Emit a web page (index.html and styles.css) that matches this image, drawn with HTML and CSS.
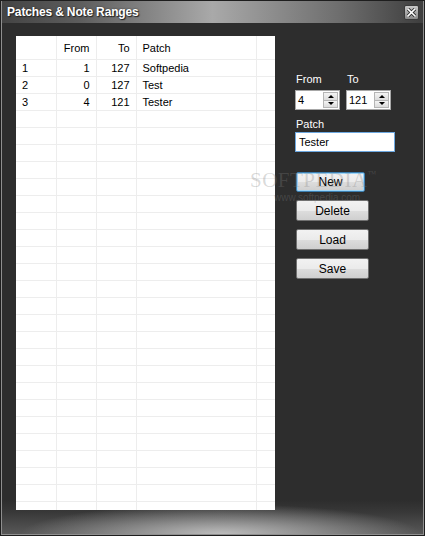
FILE: index.html
```html
<!DOCTYPE html>
<html lang="en">
<head>
<meta charset="utf-8"/>
<title>Patches &amp; Note Ranges</title>
<link rel="stylesheet" href="styles.css">
</head>
<body>
<div class="window">
    <div class="titlebar">
        <span class="title">Patches &amp; Note Ranges</span>
        <span class="close">
            <svg width="9" height="9" viewBox="0 0 9 9">
                <path d="M1 1 L8 8 M8 1 L1 8" stroke="#333" stroke-width="3.4" stroke-linecap="square"/>
                <path d="M1 1 L8 8 M8 1 L1 8" stroke="#fff" stroke-width="1.6" stroke-linecap="square"/>
            </svg>
        </span>
    </div>
    <div class="client">
        <div class="grid">
            <table>
                <colgroup>
                    <col class="c-num"><col class="c-from"><col class="c-to"><col class="c-patch"><col>
                </colgroup>
                <thead>
                    <tr><th></th><th class="num">From</th><th class="num">To</th><th>Patch</th><th></th></tr>
                </thead>
                <tbody id="rows">
                    <tr><td>1</td><td class="num">1</td><td class="num">127</td><td>Softpedia</td><td></td></tr>
                    <tr><td>2</td><td class="num">0</td><td class="num">127</td><td>Test</td><td></td></tr>
                    <tr><td>3</td><td class="num">4</td><td class="num">121</td><td>Tester</td><td></td></tr>
                    <tr><td></td><td></td><td></td><td></td><td></td></tr>
                    <tr><td></td><td></td><td></td><td></td><td></td></tr>
                    <tr><td></td><td></td><td></td><td></td><td></td></tr>
                    <tr><td></td><td></td><td></td><td></td><td></td></tr>
                    <tr><td></td><td></td><td></td><td></td><td></td></tr>
                    <tr><td></td><td></td><td></td><td></td><td></td></tr>
                    <tr><td></td><td></td><td></td><td></td><td></td></tr>
                    <tr><td></td><td></td><td></td><td></td><td></td></tr>
                    <tr><td></td><td></td><td></td><td></td><td></td></tr>
                    <tr><td></td><td></td><td></td><td></td><td></td></tr>
                    <tr><td></td><td></td><td></td><td></td><td></td></tr>
                    <tr><td></td><td></td><td></td><td></td><td></td></tr>
                    <tr><td></td><td></td><td></td><td></td><td></td></tr>
                    <tr><td></td><td></td><td></td><td></td><td></td></tr>
                    <tr><td></td><td></td><td></td><td></td><td></td></tr>
                    <tr><td></td><td></td><td></td><td></td><td></td></tr>
                    <tr><td></td><td></td><td></td><td></td><td></td></tr>
                    <tr><td></td><td></td><td></td><td></td><td></td></tr>
                    <tr><td></td><td></td><td></td><td></td><td></td></tr>
                    <tr><td></td><td></td><td></td><td></td><td></td></tr>
                    <tr><td></td><td></td><td></td><td></td><td></td></tr>
                    <tr><td></td><td></td><td></td><td></td><td></td></tr>
                    <tr><td></td><td></td><td></td><td></td><td></td></tr>
                    <tr><td></td><td></td><td></td><td></td><td></td></tr>
                </tbody>
            </table>
        </div>
        <div class="panel">
            <div class="ranges">
                <div class="field">
                    <div class="label">From</div>
                    <div class="spin"><span class="val">4</span><span class="arrows"><i class="up"></i><i class="down"></i></span></div>
                </div>
                <div class="field">
                    <div class="label">To</div>
                    <div class="spin"><span class="val">121</span><span class="arrows"><i class="up"></i><i class="down"></i></span></div>
                </div>
            </div>
            <div class="label patch-label">Patch</div>
            <div class="textbox">Tester</div>
            <div class="buttons">
                <button class="btn focused">New</button>
                <button class="btn">Delete</button>
                <button class="btn">Load</button>
                <button class="btn">Save</button>
            </div>
        </div>
        <div class="watermark">SOFTPEDIA<span class="tm">™</span><div class="url">www.softpedia.com</div></div>
    </div>
</div>
</body>
</html>
```

FILE: styles.css
```css
html, body {
    margin:0;
    padding:0;
}
body {
    background:#2d2d2d;
    font-family: "Liberation Sans", Arial, sans-serif;
    font-size:11px;
    color:#000;
}
.window {
    box-sizing:border-box;
    width:425px;
    height:536px;
    border:1px solid #1e1e1e;
    box-shadow: inset 0 0 0 1px #8f8f8f;
    display:flex;
    flex-direction:column;
    background:#2d2d2d;
    overflow:hidden;
}
.titlebar {
    display:flex;
    align-items:center;
    justify-content:space-between;
    height:22px;
    flex:none;
    padding:0 4px 0 5px;
    margin:0 1px;
    background: linear-gradient(90deg, #444 0%, #5c5c5c 18%, #a9a9a9 50%, #6e6e6e 80%, #3e3e3e 100%);
}
.title {
    color:#fff;
    font-weight:bold;
    font-size:12px;
    letter-spacing:-0.15px;
    text-shadow: 1px 1px 1px #222, 0 0 2px #333;
}
.close {
    display:flex;
    align-items:center;
    justify-content:center;
    width:13px;
    height:13px;
    border:1px solid #3a3a3a;
    border-radius:2px;
    background: linear-gradient(#c8c8c8, #8a8a8a);
    margin-top:1px;
}
.client {
    position:relative;
    flex:1;
    display:flex;
    align-items:flex-start;
    padding:13px 0 0 14px;
    margin:0 1px 1px;
    background:
        radial-gradient(ellipse 200px 30px at 52% 100%, rgba(200,200,200,0.9), rgba(200,200,200,0) 100%),
        linear-gradient(#2d2d2d calc(100% - 34px), #383838 calc(100% - 22px), #585858 100%);
}
.grid {
    width:259px;
    height:474px;
    background:#fff;
    overflow:hidden;
    flex:none;
}
.grid table {
    width:259px;
    border-collapse:collapse;
    table-layout:fixed;
}
.c-num, .c-from, .c-to { width:40px; }
.c-patch { width:120px; }
.grid th, .grid td {
    box-sizing:border-box;
    border-right:1px solid #ededed;
    border-bottom:1px solid #ededed;
    padding:0 6px;
    font-weight:normal;
    text-align:left;
    white-space:nowrap;
    overflow:hidden;
}
.grid th:last-child, .grid td:last-child {
    border-right:none;
}
.grid th {
    height:23px;
    padding-top:1px;
}
.grid td {
    height:17px;
    padding-top:1px;
}
.grid .num {
    text-align:right;
    padding-right:6px;
}
.panel {
    margin-left:20px;
    padding-top:36px;
    color:#fff;
    width:100px;
}
.ranges {
    display:flex;
    gap:6px;
}
.label {
    line-height:14px;
    height:14px;
    padding-left:1px;
}
.field .label {
    margin-bottom:4px;
}
.spin {
    box-sizing:border-box;
    width:45px;
    height:20px;
    display:flex;
    justify-content:space-between;
    background:#fff;
    color:#000;
    border:1px solid #a7a7a7;
    padding:1px;
}
.spin .val {
    line-height:16px;
    padding-left:1px;
}
.arrows {
    display:flex;
    flex-direction:column;
    width:15px;
    height:16px;
}
.arrows i {
    box-sizing:border-box;
    flex:1;
    display:flex;
    align-items:center;
    justify-content:center;
    background: linear-gradient(#f4f4f4, #dcdcdc);
    border:1px solid #b5b5b5;
}
.arrows i + i {
    border-top:none;
}
.arrows i::after {
    content:"";
    border-left:3px solid transparent;
    border-right:3px solid transparent;
}
.arrows .up::after {
    border-bottom:3px solid #000;
}
.arrows .down::after {
    border-top:3px solid #000;
}
.patch-label {
    margin-top:7px;
    margin-bottom:1px;
}
.textbox {
    box-sizing:border-box;
    width:100px;
    height:20px;
    background:#fff;
    color:#000;
    border:1px solid #6da8e0;
    line-height:18px;
    padding-left:3px;
}
.buttons {
    display:flex;
    flex-direction:column;
    align-items:flex-start;
    gap:8px;
    margin-top:20px;
    padding-left:1px;
}
.btn {
    box-sizing:border-box;
    width:73px;
    height:21px;
    padding:0;
    font-family:inherit;
    font-size:12px;
    color:#000;
    border:1px solid #707070;
    border-radius:2px;
    background: linear-gradient(#f2f2f2 0%, #ebebeb 50%, #dddddd 51%, #cfcfcf 100%);
}
.btn.focused {
    width:69px;
    height:20px;
    border:1px solid #3c7fb1;
    box-shadow: inset 0 0 0 1px #9dd5f8;
}
.watermark {
    position:absolute;
    left:248px;
    top:145px;
    font-family:"Liberation Serif", "Times New Roman", serif;
    font-size:21px;
    letter-spacing:0.5px;
    color:rgba(130,130,130,0.3);
    pointer-events:none;
    line-height:24px;
}
.watermark .tm {
    font-size:9px;
    vertical-align:top;
    line-height:12px;
}
.watermark .url {
    font-family:"Liberation Sans", Arial, sans-serif;
    font-size:10px;
    letter-spacing:0;
    line-height:12px;
    padding-left:24px;
}
```
